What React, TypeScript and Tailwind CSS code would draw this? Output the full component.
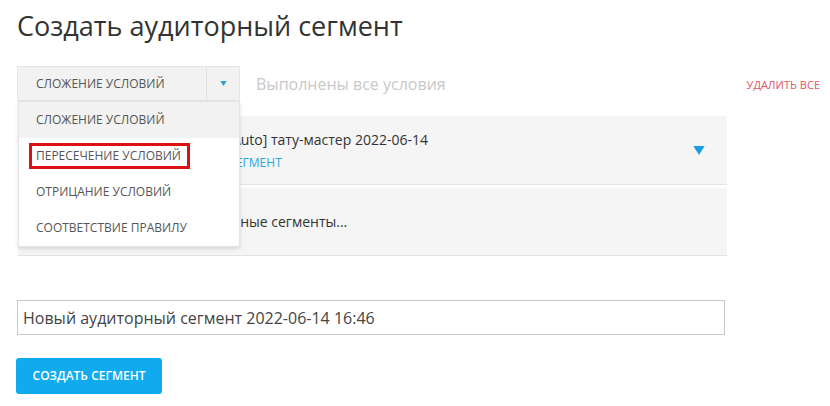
import { useState } from 'react'

const options = ['СЛОЖЕНИЕ УСЛОВИЙ', 'ПЕРЕСЕЧЕНИЕ УСЛОВИЙ', 'ОТРИЦАНИЕ УСЛОВИЙ', 'СООТВЕТСТВИЕ ПРАВИЛУ']

function Caret({ className }: { className: string }) {
    return <svg className={className} viewBox="0 0 10 8">
        <path d="M0 0 L10 0 L5 8 Z" fill="currentColor" />
    </svg>
}

function ModeSelect() {
    const [value] = useState(options[0])
    return <div className="relative w-[223px]">
        <div className="flex h-[35px] bg-[#f2f2f2] border border-[#e6e6e6]">
            <div className="flex-1 flex items-center pl-[18px] text-[12px] text-[#555]">{value}</div>
            <div className="w-[33px] flex items-center justify-center border-l border-[#e2e2e2]">
                <Caret className="w-[7px] h-[5px] text-[#2a9fd0]" />
            </div>
        </div>
        <div className="absolute z-10 left-[1px] top-[35px] w-[222px] bg-white border border-[#e4e4e4] shadow-[0_2px_4px_rgba(0,0,0,0.12)]">
            {options.map((o, i) => (
                <div key={o} className={`h-9 flex items-center pl-[17px] text-[12px] text-[#555] ${i === 0 ? 'bg-[#f2f2f2]' : ''}`}>
                    {i === 1
                        ? <span className="ml-[-7px] pl-[4px] pr-[6px] leading-[20px] border-[3px] border-[#dd1111]">{o}</span>
                        : o}
                </div>
            ))}
        </div>
    </div>
}

function SegmentCard() {
    return <div className="h-[69px] bg-[#f5f5f5] border-b border-[#e2e2e2] flex items-center pl-[18px] pr-[22px]">
        <div className="flex-1">
            <div className="text-[14px] text-[#333] leading-[20px]">Сегмент посетителей сайта [Auto] тату-мастер 2022-06-14</div>
            <div className="mt-[5px] text-[12px] text-[#2aa7de] leading-[16px]">ОТКРЫТЬ РАНЕЕ СОХРАНЕННЫЙ СЕГМЕНТ</div>
        </div>
        <Caret className="w-[12px] h-[9px] text-[#1b9de2]" />
    </div>
}

function PickCard() {
    return <div className="h-[68px] bg-[#f5f5f5] border-b border-[#e2e2e2] flex items-center pl-[18px] text-[14px] text-[#333]">
        Нажмите, выберите сохраненные сегменты...
    </div>
}

export default function App() {
    return <div className="w-[830px] h-[406px] bg-white px-[17px] pt-[7px] font-['Open_Sans',sans-serif]">
        <h1 className="text-[27px] leading-[38px] text-[#333] font-normal">Создать аудиторный сегмент</h1>
        <div className="mt-[21px] flex items-center">
            <ModeSelect />
            <div className="ml-[16px] text-[16px] text-[#c8c8c8]">Выполнены все условия</div>
            <div className="flex-1"></div>
            <div className="mt-[4px] mr-[-7px] text-[11px] text-[#e25565]">УДАЛИТЬ ВСЕ</div>
        </div>
        <div className="mt-[15px] ml-[1px] w-[709px] flex flex-col gap-[3px]">
            <SegmentCard />
            <PickCard />
        </div>
        <div className="mt-[44px] w-[708px] h-[35px] border border-[#c8c8c8] flex items-center pl-[5px] text-[16px] text-[#444]">
            Новый аудиторный сегмент 2022-06-14 16:46
        </div>
        <button className="mt-[23px] ml-[-1px] w-[146px] h-[36px] rounded-[3px] bg-[#10abef] text-white text-[12px] font-semibold">
            СОЗДАТЬ СЕГМЕНТ
        </button>
    </div>
}
